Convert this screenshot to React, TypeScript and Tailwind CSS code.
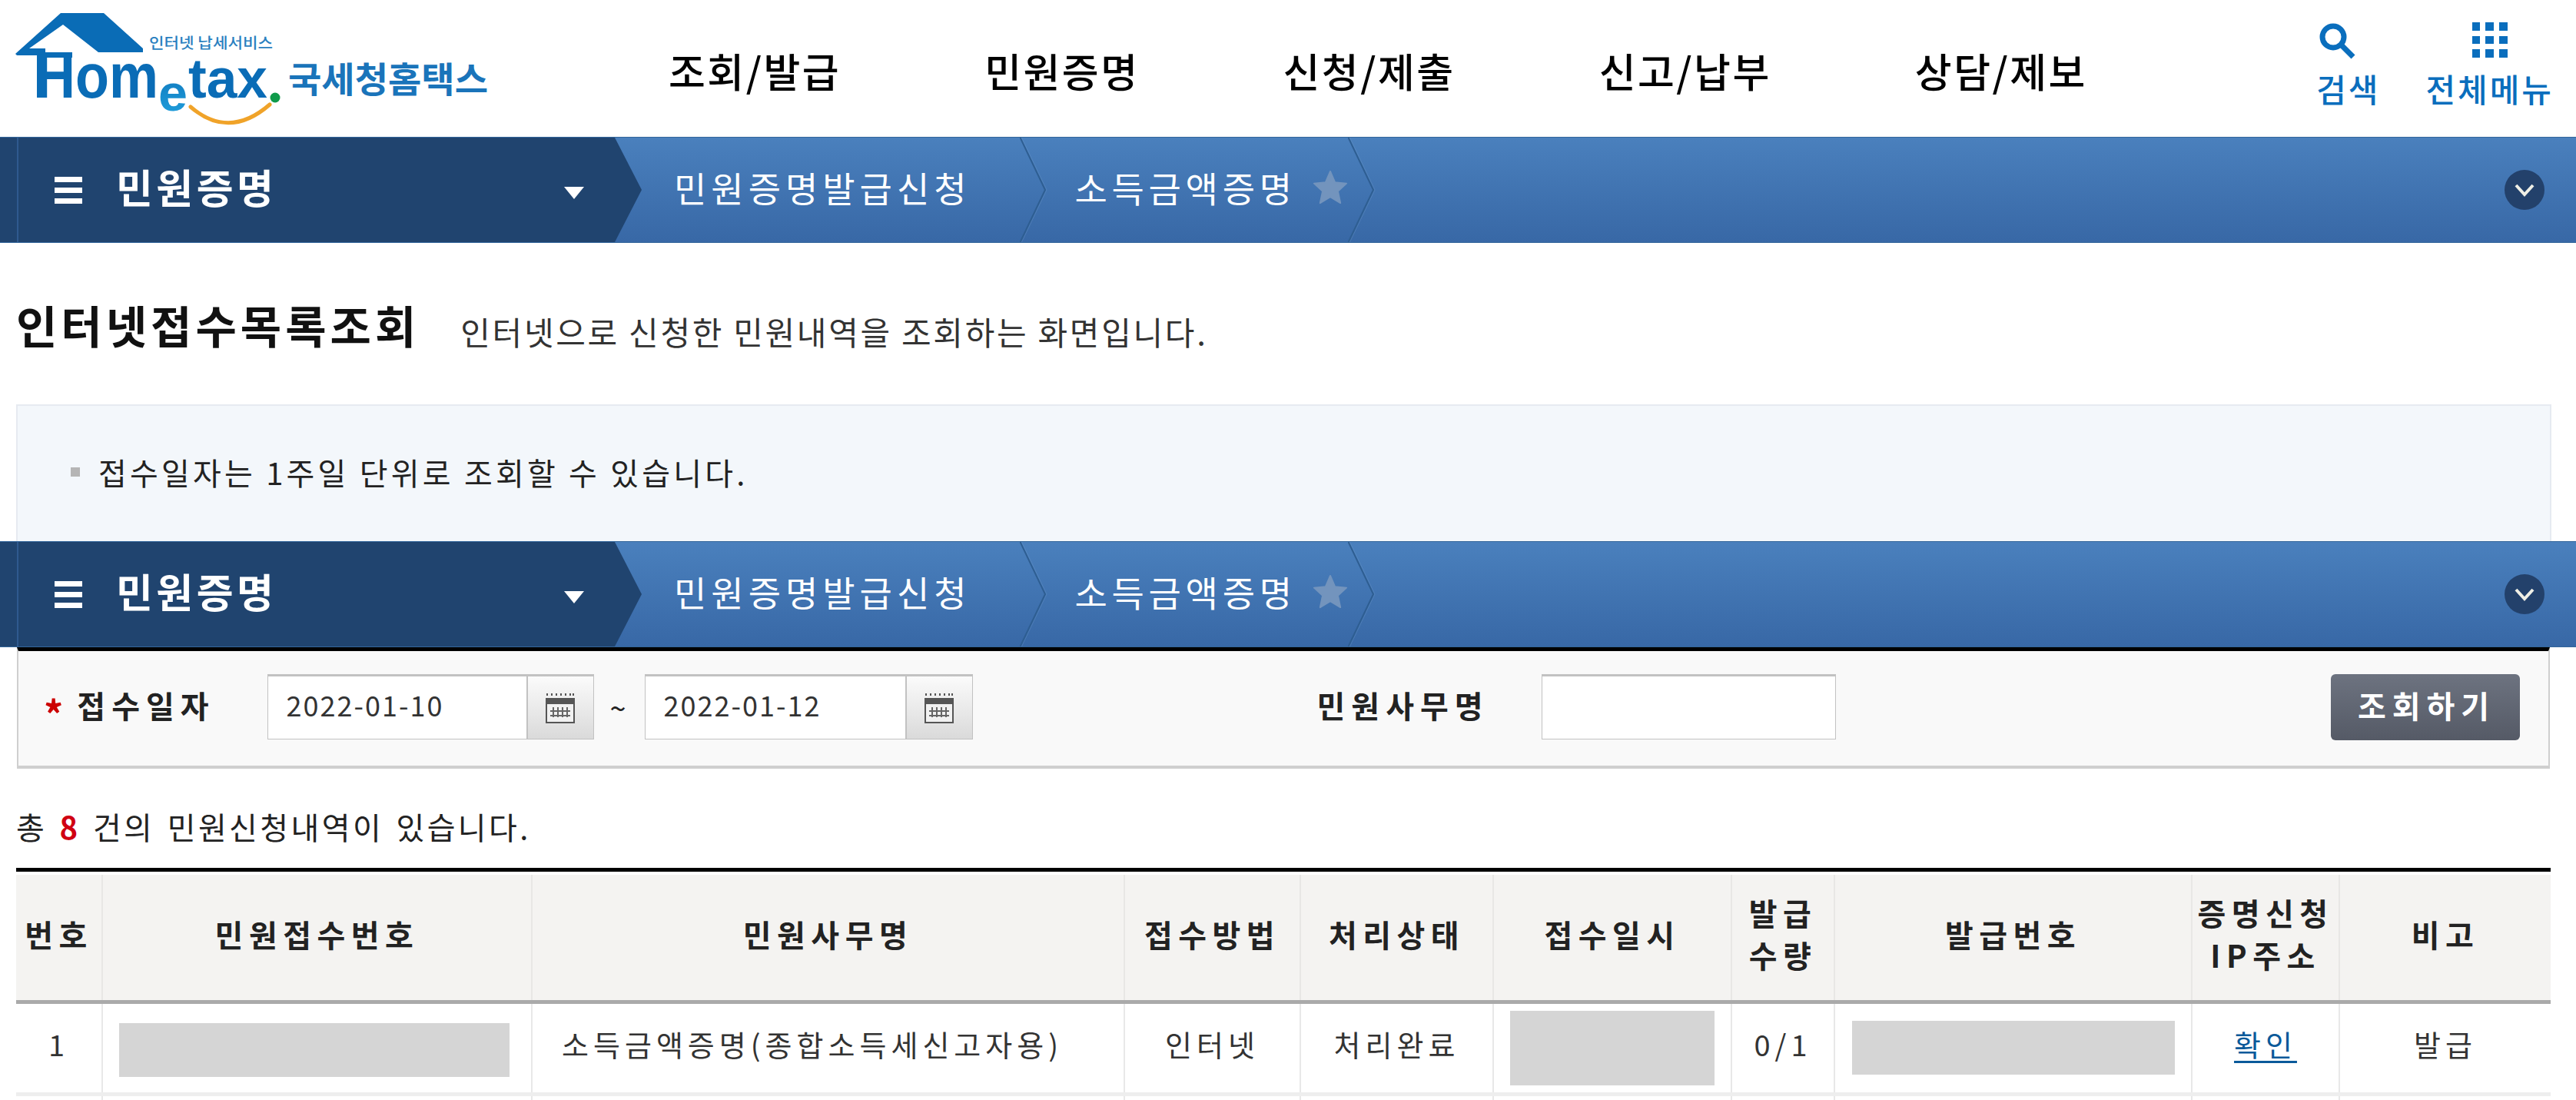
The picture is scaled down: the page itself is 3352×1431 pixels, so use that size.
import React from "react";

function Logo() {
  return (
    <svg width="660" height="178" viewBox="0 0 660 178" className="block shrink-0">
      <defs>
        <linearGradient id="eg" x1="0" y1="0" x2="0" y2="1">
          <stop offset="0" stopColor="#0d72b9" />
          <stop offset="1" stopColor="#22a3df" />
        </linearGradient>
      </defs>
      <path d="M79 17H135L186 63V68H128L82 32L38 63H59V68H94V75H61V72H22L20 70Z" fill="#0a6cb6" />
      <path d="M48 72H61V127H48Z" fill="#0a6cb6" />
      <text x="46" y="127" fontFamily="Liberation Sans, sans-serif" fontWeight="700" fontSize="82" fill="#0a6cb6" textLength="160" lengthAdjust="spacingAndGlyphs">Hom</text>
      <text x="206" y="144" fontFamily="Liberation Sans, sans-serif" fontWeight="700" fontSize="66" fill="url(#eg)" textLength="38" lengthAdjust="spacingAndGlyphs">e</text>
      <text x="245" y="127" fontFamily="Liberation Sans, sans-serif" fontWeight="700" fontSize="72" fill="#0a6cb6" textLength="103" lengthAdjust="spacingAndGlyphs">tax</text>
      <circle cx="358" cy="127" r="6.5" fill="#0f9a4a" />
      <path d="M248 139Q298 182 351 136" fill="none" stroke="#f0a329" strokeWidth="5" strokeLinecap="round" />
      <text x="194" y="63" fontFamily="'Noto Sans CJK KR', sans-serif" fontWeight="500" fontSize="19" fill="#2a7fc0" textLength="161" lengthAdjust="spacingAndGlyphs">인터넷 납세서비스</text>
      <text x="375" y="120" fontFamily="'Noto Sans CJK KR', sans-serif" fontWeight="700" fontSize="46" fill="#1a74ba" textLength="260" lengthAdjust="spacingAndGlyphs">국세청홈택스</text>
    </svg>
  );
}

function Chevron({ className }: { className: string }) {
  return (
    <svg width="36" height="136" viewBox="0 0 36 136" className={className}>
      <path d="M0.5 0L33 68L0.5 136" fill="none" stroke="#2e5e92" strokeWidth="2" />
      <path d="M2.5 0L35 68L2.5 136" fill="none" stroke="#6f9bcb" strokeOpacity="0.35" strokeWidth="1" />
    </svg>
  );
}

function NavBar() {
  return (
    <div className="flex h-[138px] w-full items-stretch border-y border-[#33669b] bg-gradient-to-b from-[#4a80bd] to-[#3868a6] text-white">
      <div className="flex w-[800px] shrink-0 items-center border-l-[22px] border-[#20446f] bg-[#20446f] pl-[49px] shadow-[inset_2px_0_0_#2f5a8f]">
        <span className="flex w-[36px] flex-col gap-[7px]">
          <span className="h-[7px] bg-white" />
          <span className="h-[7px] bg-white" />
          <span className="h-[7px] bg-white" />
        </span>
        <span className="ml-[44px] mb-[8px] text-[52px] leading-none font-bold tracking-[4.5px]">민원증명</span>
        <svg width="26" height="16" viewBox="0 0 26 16" className="ml-[374px] mt-[8px] shrink-0">
          <path d="M0 0H26L13 16Z" fill="#fff" />
        </svg>
      </div>
      <svg width="36" height="136" viewBox="0 0 36 136" className="shrink-0">
        <path d="M0 0L35 68L0 136Z" fill="#20446f" />
      </svg>
      <span className="ml-[41px] mb-[8px] self-center text-[46px] leading-none tracking-[6px]">민원증명발급신청</span>
      <Chevron className="ml-[63px] shrink-0" />
      <span className="ml-[36px] mb-[8px] self-center text-[46px] leading-none tracking-[5.7px]">소득금액증명</span>
      <svg width="46" height="46" viewBox="0 0 24 24" className="ml-[21px] mb-[6px] shrink-0 self-center">
        <path d="M12 1L15.2 8.4L23 9.2L17.2 14.5L18.9 22.5L12 18.3L5.1 22.5L6.8 14.5L1 9.2L8.8 8.4Z" fill="#7394bd" stroke="#7394bd" strokeLinejoin="round" />
      </svg>
      <Chevron className="shrink-0" />
      <div className="ml-auto mr-[41px] flex h-[52px] w-[52px] items-center justify-center self-center rounded-full bg-[#23416b]">
        <svg width="28" height="20" viewBox="0 0 28 20">
          <path d="M3 4L14 16L25 4" fill="none" stroke="#efefe6" strokeWidth="4" />
        </svg>
      </div>
    </div>
  );
}

function CalendarButton() {
  return (
    <div className="flex h-[85px] w-[87px] shrink-0 items-center justify-center border-x border-b border-t-[3px] border-[#c2c2c2] bg-gradient-to-b from-[#fbfbfb] to-[#dadada]">
      <svg width="38" height="40" viewBox="0 0 38 40">
        <path d="M2 1V4M8 1V4M14 1V4M20 1V4M26 1V4M32 1V4M36 1V4" stroke="#555" strokeWidth="2" />
        <rect x="1" y="8" width="36" height="31" fill="#f1f1f1" stroke="#555" strokeWidth="2" />
        <rect x="1" y="8" width="36" height="7" fill="#555" />
        <path d="M10 19V32M16 19V32M22 19V32M28 19V32M6 24H32M6 30H32" stroke="#666" strokeWidth="2" />
      </svg>
    </div>
  );
}

function DateField({ value, width }: { value: string; width: string }) {
  return (
    <div className="flex">
      <div className={`flex h-[85px] items-center border-x border-b border-t-[3px] border-[#c2c2c2] bg-white pb-[10px] pl-[24px] text-[36px] leading-none tracking-[2px] text-[#333] ${width}`}>
        {value}
      </div>
      <CalendarButton />
    </div>
  );
}

const cols = [112, 559, 771, 229, 251, 310, 134, 465, 192, 275];
const thClass = "border-r-2 border-[#e8e7e5] p-0 pb-[8px] text-center text-[40px] leading-[55px] font-bold tracking-[7.5px] text-[#222] last:border-r-0";
const tdClass = "border-r-2 border-[#e8e8e8] p-0 text-center text-[38px] leading-none tracking-[6px] text-[#333] last:border-r-0";

export default function App() {
  return (
    <div className="h-[1431px] w-[3352px] overflow-hidden bg-white [font-family:'Noto_Sans_CJK_KR','Noto_Sans',sans-serif]">
      <header className="flex h-[178px] items-center">
        <Logo />
        <nav className="ml-[210px] mt-[6px] flex gap-[187px] text-[52px] leading-none font-medium tracking-[2.5px] text-black">
          <span>조회/발급</span>
          <span>민원증명</span>
          <span>신청/제출</span>
          <span>신고/납부</span>
          <span>상담/제보</span>
        </nav>
        <div className="ml-auto mr-[29px] flex gap-[59px] text-[42px] leading-none font-medium tracking-[3px] text-[#0a6ebd]">
          <div className="flex flex-col items-start">
            <svg width="48" height="48" viewBox="0 0 48 48" className="ml-[3px] mt-[-13px]">
              <circle cx="19" cy="19" r="14" fill="none" stroke="#0a6ebd" strokeWidth="7" />
              <path d="M29 29L45 45" stroke="#0a6ebd" strokeWidth="7" />
            </svg>
            <span className="mt-[17px]">검색</span>
          </div>
          <div className="flex flex-col items-center">
            <div className="mt-[-13px] grid h-[46px] w-[46px] grid-cols-3 grid-rows-3 gap-[7px]">
              {Array.from({ length: 9 }).map((_, i) => (
                <span key={i} className="bg-[#0a6ebd]" />
              ))}
            </div>
            <span className="mt-[19px]">전체메뉴</span>
          </div>
        </div>
      </header>

      <NavBar />

      <div className="flex items-end px-[21px] pt-[76px] pb-[74px]">
        <h1 className="text-[58px] leading-[60px] font-bold tracking-[5px] text-[#111]">인터넷접수목록조회</h1>
        <p className="ml-[53px] -mb-[4px] text-[42px] leading-[50px] tracking-[2.7px] text-[#333]">인터넷으로 신청한 민원내역을 조회하는 화면입니다.</p>
      </div>

      <div className="ml-[21px] flex h-[178px] w-[3299px] items-center border-2 border-b-0 border-[#e6eaf1] bg-[#f3f7fb] pb-[4px] pl-[69px]">
        <span className="mr-[24px] h-[12px] w-[12px] bg-[#b5b5b5]" />
        <span className="text-[40px] leading-none tracking-[4.2px] text-[#222]">접수일자는 1주일 단위로 조회할 수 있습니다.</span>
      </div>

      <NavBar />

      <div className="mx-[22px] box-border flex h-[158px] w-[3296px] items-center border-x-2 border-t-[5px] border-b-[4px] border-x-[#cfcfcf] border-t-black border-b-[#cfcfcf] bg-[#f9f9f9] pb-[4px]">
        <span className="ml-[33px] mt-[14px] text-[50px] leading-none font-bold text-[#c00]">*</span>
        <span className="ml-[18px] mb-[6px] text-[40px] leading-none font-bold tracking-[8px] text-[#222]">접수일자</span>
        <div className="ml-[68px]"><DateField value="2022-01-10" width="w-[338px]" /></div>
        <span className="ml-[21px] w-[45px] text-[38px] leading-none text-[#222]">~</span>
        <DateField value="2022-01-12" width="w-[340px]" />
        <span className="ml-[448px] mb-[6px] text-[40px] leading-none font-bold tracking-[8px] text-[#222]">민원사무명</span>
        <div className="ml-[68px] h-[85px] w-[383px] border-x border-b border-t-[3px] border-[#c2c2c2] bg-white" />
        <button className="ml-[644px] h-[86px] w-[246px] rounded-[6px] bg-gradient-to-b from-[#6d7380] to-[#555a66] pb-[6px] pl-[4px] text-[40px] leading-none font-bold tracking-[8px] text-white">조회하기</button>
      </div>

      <p className="mx-[21px] mt-[50px] mb-[29px] text-[40px] leading-[50px] tracking-[3.4px] text-[#222] [word-spacing:4px]">
        총 <b className="text-[#d00012]">8</b> 건의 민원신청내역이 있습니다.
      </p>

      <div className="mx-[21px] w-[3298px] border-t-[5px] border-black pt-[4px]">
        <table className="w-[3298px] table-fixed border-collapse">
          <colgroup>
            {cols.map((c, i) => (
              <col key={i} style={{ width: c }} />
            ))}
          </colgroup>
          <thead>
            <tr className="h-[165px] border-b-[5px] border-[#aaa] bg-[#f4f3f1]">
              <th className={thClass}>번호</th>
              <th className={thClass}>민원접수번호</th>
              <th className={thClass}>민원사무명</th>
              <th className={thClass}>접수방법</th>
              <th className={thClass}>처리상태</th>
              <th className={thClass}>접수일시</th>
              <th className={thClass}>발급<br />수량</th>
              <th className={thClass}>발급번호</th>
              <th className={thClass}>증명신청<br />IP주소</th>
              <th className={thClass}>비고</th>
            </tr>
          </thead>
          <tbody>
            <tr className="h-[120px] border-b-[5px] border-[#eee]">
              <td className={`${tdClass} pb-[10px]`}>1</td>
              <td className={tdClass}><div className="ml-[21px] mt-[6px] h-[70px] w-[508px] bg-[#d5d5d5]" /></td>
              <td className={`${tdClass} pb-[10px] pl-[38px] text-left`}>소득금액증명(종합소득세신고자용)</td>
              <td className={`${tdClass} pb-[10px]`}>인터넷</td>
              <td className={`${tdClass} pb-[10px]`}>처리완료</td>
              <td className={tdClass}><div className="mx-auto h-[97px] w-[266px] bg-[#d5d5d5]" /></td>
              <td className={`${tdClass} pb-[10px]`}>0/1</td>
              <td className={tdClass}><div className="mx-auto h-[70px] w-[420px] bg-[#d5d5d5]" /></td>
              <td className={`${tdClass} pb-[10px]`}><a className="text-[#0a5a9a] underline underline-offset-[6px]">확인</a></td>
              <td className={`${tdClass} pb-[10px]`}>발급</td>
            </tr>
            <tr className="h-[60px]">
              {cols.map((_, i) => (
                <td key={i} className={tdClass} />
              ))}
            </tr>
          </tbody>
        </table>
      </div>
    </div>
  );
}
